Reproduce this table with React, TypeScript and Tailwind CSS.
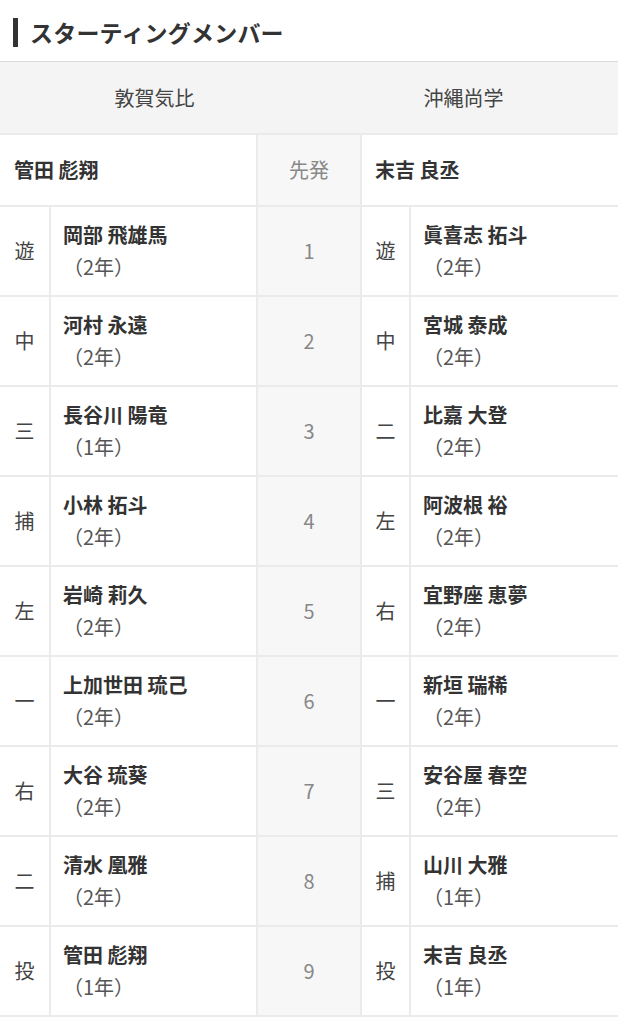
import React from 'react';

type Player = { pos: string; name: string; grade: string };

const home = { team: '敦賀気比', pitcher: '管田 彪翔' };
const away = { team: '沖縄尚学', pitcher: '末吉 良丞' };

const homeLineup: Player[] = [
  { pos: '遊', name: '岡部 飛雄馬', grade: '2年' },
  { pos: '中', name: '河村 永遠', grade: '2年' },
  { pos: '三', name: '長谷川 陽竜', grade: '1年' },
  { pos: '捕', name: '小林 拓斗', grade: '2年' },
  { pos: '左', name: '岩崎 莉久', grade: '2年' },
  { pos: '一', name: '上加世田 琉己', grade: '2年' },
  { pos: '右', name: '大谷 琉葵', grade: '2年' },
  { pos: '二', name: '清水 凰雅', grade: '2年' },
  { pos: '投', name: '管田 彪翔', grade: '1年' },
];

const awayLineup: Player[] = [
  { pos: '遊', name: '眞喜志 拓斗', grade: '2年' },
  { pos: '中', name: '宮城 泰成', grade: '2年' },
  { pos: '二', name: '比嘉 大登', grade: '2年' },
  { pos: '左', name: '阿波根 裕', grade: '2年' },
  { pos: '右', name: '宜野座 恵夢', grade: '2年' },
  { pos: '一', name: '新垣 瑞稀', grade: '2年' },
  { pos: '三', name: '安谷屋 春空', grade: '2年' },
  { pos: '捕', name: '山川 大雅', grade: '1年' },
  { pos: '投', name: '末吉 良丞', grade: '1年' },
];

const rowGrid = 'grid grid-cols-[49px_205px_102px_47px_207px] gap-x-[2px]';

function NameCell({ p }: { p: Player }) {
  return (
    <div className="bg-white px-3 py-3 flex flex-col justify-center">
      <span className="text-[20px] leading-[32px] font-bold text-[#333]">{p.name}</span>
      <span className="text-[20px] leading-[32px] text-[#555]">（{p.grade}）</span>
    </div>
  );
}

export default function App() {
  return (
    <div
      className="w-[618px] bg-white"
      style={{ fontFamily: '"Noto Sans CJK JP", "Noto Sans", sans-serif' }}
    >
      <div className="h-[61px] flex items-center pl-[13px] pt-[4px]">
        <span className="w-[5px] h-[29px] bg-[#333] mr-[12px]" />
        <h2 className="text-[23px] font-bold text-[#333] leading-none tracking-[0.2px]">スターティングメンバー</h2>
      </div>

      <div className="border-t border-[#dadada] bg-[#ebebeb] flex flex-col gap-y-[2px] pb-[2px]">
        <div className="flex h-[71px] bg-[#f4f4f4] text-[20px] text-[#444]">
          <div className="w-[309px] flex items-center justify-center">{home.team}</div>
          <div className="w-[309px] flex items-center justify-center">{away.team}</div>
        </div>

        <div className={`${rowGrid} h-[70px]`}>
          <div className="col-span-2 bg-white flex items-center pl-[14px] text-[20px] font-bold text-[#333]">
            {home.pitcher}
          </div>
          <div className="bg-[#f7f7f7] flex items-center justify-center text-[20px] text-[#888]">先発</div>
          <div className="col-span-2 bg-white flex items-center pl-[13px] text-[20px] font-bold text-[#333]">
            {away.pitcher}
          </div>
        </div>

        {homeLineup.map((p, i) => (
          <div key={i} className={`${rowGrid} h-[88px]`}>
            <div className="bg-white flex items-center justify-center text-[20px] text-[#444]">{p.pos}</div>
            <NameCell p={p} />
            <div className="bg-[#f7f7f7] flex items-center justify-center text-[20px] text-[#888]">{i + 1}</div>
            <div className="bg-white flex items-center justify-center text-[20px] text-[#444]">{awayLineup[i].pos}</div>
            <NameCell p={awayLineup[i]} />
          </div>
        ))}
      </div>
    </div>
  );
}
